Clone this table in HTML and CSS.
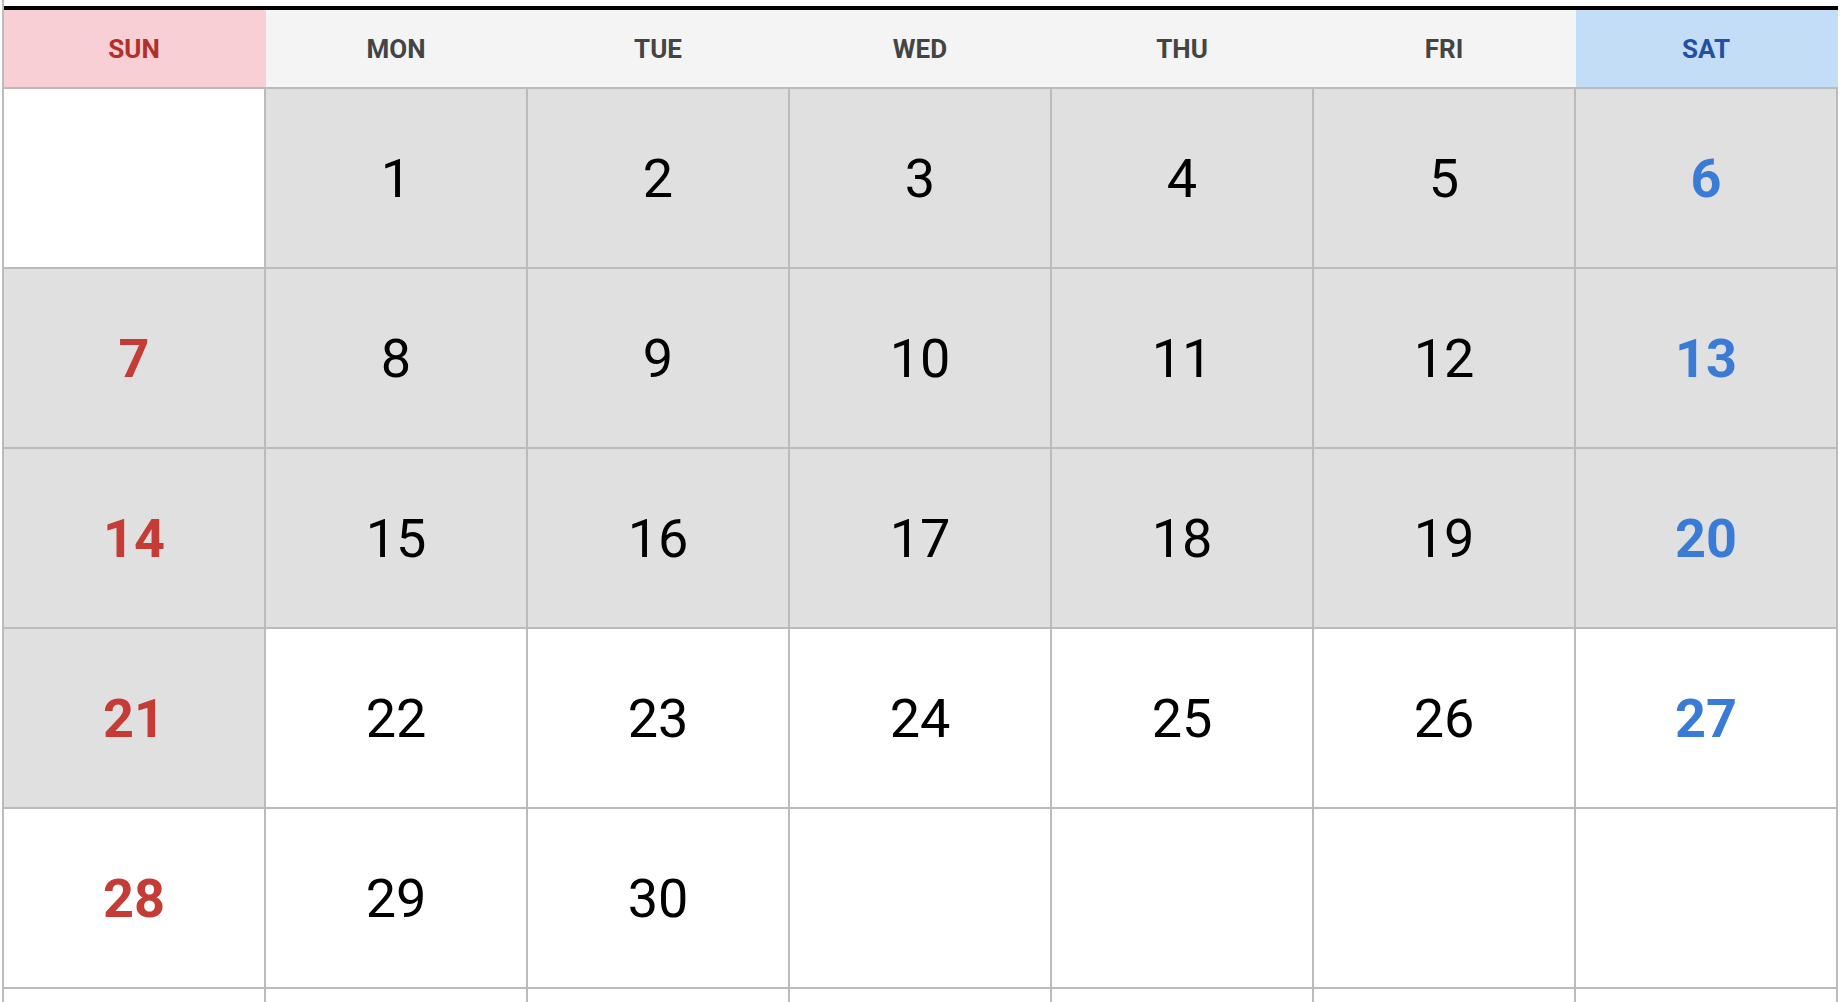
FILE: index.html
```html
<!DOCTYPE html>
<html lang="en">
<head>
<meta charset="utf-8">
<title>Calendar</title>
<link rel="stylesheet" href="styles.css">
</head>
<body>
<div class="wrap">
  <div class="head">
    <div class="hd sun">SUN</div>
    <div class="hd">MON</div>
    <div class="hd">TUE</div>
    <div class="hd">WED</div>
    <div class="hd">THU</div>
    <div class="hd">FRI</div>
    <div class="hd sat">SAT</div>
  </div>
  <div class="grid">
    <div class="c"></div>
    <div class="c g">1</div>
    <div class="c g">2</div>
    <div class="c g">3</div>
    <div class="c g">4</div>
    <div class="c g">5</div>
    <div class="c g sa">6</div>

    <div class="c g su">7</div>
    <div class="c g">8</div>
    <div class="c g">9</div>
    <div class="c g">10</div>
    <div class="c g">11</div>
    <div class="c g">12</div>
    <div class="c g sa">13</div>

    <div class="c g su">14</div>
    <div class="c g">15</div>
    <div class="c g">16</div>
    <div class="c g">17</div>
    <div class="c g">18</div>
    <div class="c g">19</div>
    <div class="c g sa">20</div>

    <div class="c g su">21</div>
    <div class="c">22</div>
    <div class="c">23</div>
    <div class="c">24</div>
    <div class="c">25</div>
    <div class="c">26</div>
    <div class="c sa">27</div>

    <div class="c su">28</div>
    <div class="c">29</div>
    <div class="c">30</div>
    <div class="c"></div>
    <div class="c"></div>
    <div class="c"></div>
    <div class="c"></div>

    <div class="c"></div>
    <div class="c"></div>
    <div class="c"></div>
    <div class="c"></div>
    <div class="c"></div>
    <div class="c"></div>
    <div class="c"></div>
  </div>
</div>
</body>
</html>
```

FILE: styles.css
```css
html, body {
  margin: 0;
  padding: 0;
  height: 1002px;
  overflow: hidden;
  background: #fff;
  font-family: Roboto, "Liberation Sans", Arial, sans-serif;
}

.wrap {
  margin-left: 2px;
  border-left: 2px solid #bbbbbb;
  padding-top: 6px;
  width: 1834px;
}

.head {
  display: grid;
  grid-template-columns: repeat(7, 262px);
  border-top: 4px solid #000;
  border-bottom: 2px solid #bbbbbb;
  height: 77px;
}

.hd {
  display: flex;
  align-items: center;
  justify-content: center;
  background: #f4f4f4;
  color: #444444;
  font-weight: 700;
  font-size: 26px;
  padding-right: 2px;
}

.hd.sun {
  background: #f7cfd4;
  color: #b0302b;
}

.hd.sat {
  background: #c3ddf6;
  color: #2450a2;
}

.grid {
  display: grid;
  grid-template-columns: repeat(7, 262px);
  grid-auto-rows: 180px;
}

.c {
  box-sizing: border-box;
  border-right: 2px solid #bbbbbb;
  border-bottom: 2px solid #bbbbbb;
  background: #fff;
  display: flex;
  align-items: center;
  justify-content: center;
  font-size: 54px;
  color: #000;
  font-weight: 400;
}

.c.g {
  background: #e0e0e0;
}

.c.su {
  color: #c43c35;
  font-weight: 700;
}

.c.sa {
  color: #3a7bd5;
  font-weight: 700;
}
```
